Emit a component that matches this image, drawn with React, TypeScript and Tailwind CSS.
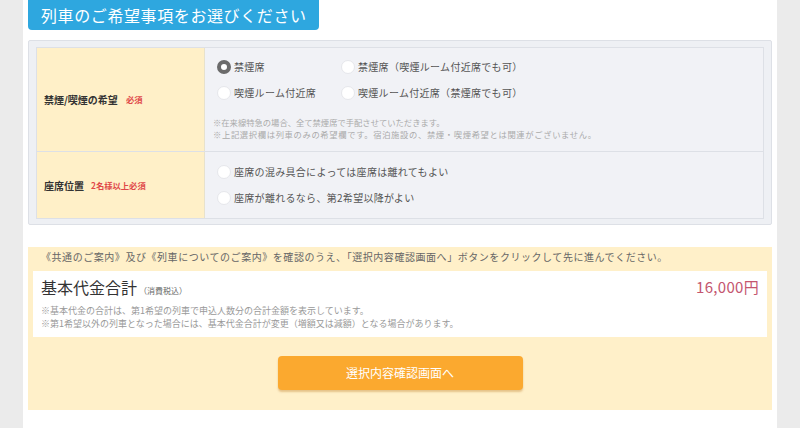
const font = { fontFamily: '"Noto Sans CJK JP", "Noto Sans", sans-serif' };

function Radio({ checked = false }: { checked?: boolean }) {
  return (
    <span
      className={
        checked
          ? "inline-block w-[14px] h-[14px] rounded-full bg-white border-[4px] border-[#6b6b6b] shrink-0"
          : "inline-block w-[14px] h-[14px] rounded-full bg-white border border-[#e6e7eb] shrink-0"
      }
    />
  );
}

function Option({ label, checked = false, wide = false }: { label: string; checked?: boolean; wide?: boolean }) {
  return (
    <label className={`flex items-center gap-[3px] ${wide ? "w-[124px]" : ""}`}>
      <Radio checked={checked} />
      <span className="text-[10px] text-[#555] tracking-[0.3px]">{label}</span>
    </label>
  );
}

export default function App() {
  return (
    <div className="w-[800px] h-[428px] bg-[#ebebeb] flex justify-center overflow-hidden" style={font}>
      <div className="w-[754px] bg-white px-[5px]">
        {/* Title tab */}
        <div className="w-[291px] h-[30px] bg-[#2ea7df] rounded-b-[4px] flex items-center pl-[13px] text-white text-[16px] tracking-[0.6px]">
          列車のご希望事項をお選びください
        </div>

        {/* Preferences table */}
        <div className="mt-[10px] border border-[#dde0e6] bg-[#eef0f4] rounded-[2px] pt-[6px] px-[7px] pb-[5px]">
          <div className="border border-[#dde0e6] bg-[#f1f2f6]">
            <div className="flex h-[104px] border-b border-[#dde0e6]">
              <div className="w-[168px] bg-[#fff0c8] border-r border-[#e8e2cc] flex items-center pl-[7px] gap-[8px]">
                <span className="text-[10px] font-bold text-[#333]">禁煙/喫煙の希望</span>
                <span className="text-[8.3px] font-bold text-[#e04848]">必須</span>
              </div>
              <div className="flex-1 pl-[12px] pt-[11px]">
                <div className="flex">
                  <Option label="禁煙席" checked wide />
                  <Option label="禁煙席（喫煙ルーム付近席でも可）" />
                </div>
                <div className="flex mt-[11px]">
                  <Option label="喫煙ルーム付近席" wide />
                  <Option label="喫煙ルーム付近席（禁煙席でも可）" />
                </div>
                <div className="mt-[16px] -ml-[4px] text-[8.3px] leading-[12px] text-[#aaa]">
                  <p>※在来線特急の場合、全て禁煙席で手配させていただきます。</p>
                  <p className="tracking-[0.65px]">※上記選択欄は列車のみの希望欄です。宿泊施設の、禁煙・喫煙希望とは関連がございません。</p>
                </div>
              </div>
            </div>
            <div className="flex h-[66px]">
              <div className="w-[168px] bg-[#fff0c8] border-r border-[#e8e2cc] flex items-center pl-[7px] gap-[7px]">
                <span className="text-[10px] font-bold text-[#333]">座席位置</span>
                <span className="text-[8.3px] font-bold text-[#e04848]">2名様以上必須</span>
              </div>
              <div className="flex-1 pl-[12px] pt-[12px] flex flex-col gap-[11px]">
                <Option label="座席の混み具合によっては座席は離れてもよい" />
                <Option label="座席が離れるなら、第2希望以降がよい" />
              </div>
            </div>
          </div>
        </div>

        {/* Total and submit */}
        <div className="mt-[22px] bg-[#fff0c9] px-[5px] pt-[3px] pb-[20px]">
          <p className="pl-[8px] text-[10px] tracking-[0.55px] text-[#666] leading-[14px] pb-[7px]">
            《共通のご案内》及び《列車についてのご案内》を確認のうえ、「選択内容確認画面へ」ボタンをクリックして先に進んでください。
          </p>
          <div className="bg-white h-[66px] px-[8px] pt-[4px]">
            <div className="flex items-center justify-between">
              <div className="flex items-baseline gap-[2px]">
                <span className="text-[16px] text-[#333]">基本代金合計</span>
                <span className="text-[8px] text-[#666]">（消費税込）</span>
              </div>
              <span className="text-[15px] text-[#c4566f] tracking-[0.3px]">16,000円</span>
            </div>
            <div className="mt-[5px] text-[9px] leading-[13px] text-[#999]">
              <p>※基本代金の合計は、第1希望の列車で申込人数分の合計金額を表示しています。</p>
              <p>※第1希望以外の列車となった場合には、基本代金合計が変更（増額又は減額）となる場合があります。</p>
            </div>
          </div>
          <div className="flex justify-center mt-[19px]">
            <button className="w-[245px] h-[34px] bg-[#fba92f] rounded-[4px] text-white text-[12px] shadow-[0_2px_2px_rgba(180,110,20,0.35)]">
              選択内容確認画面へ
            </button>
          </div>
        </div>
      </div>
    </div>
  );
}
